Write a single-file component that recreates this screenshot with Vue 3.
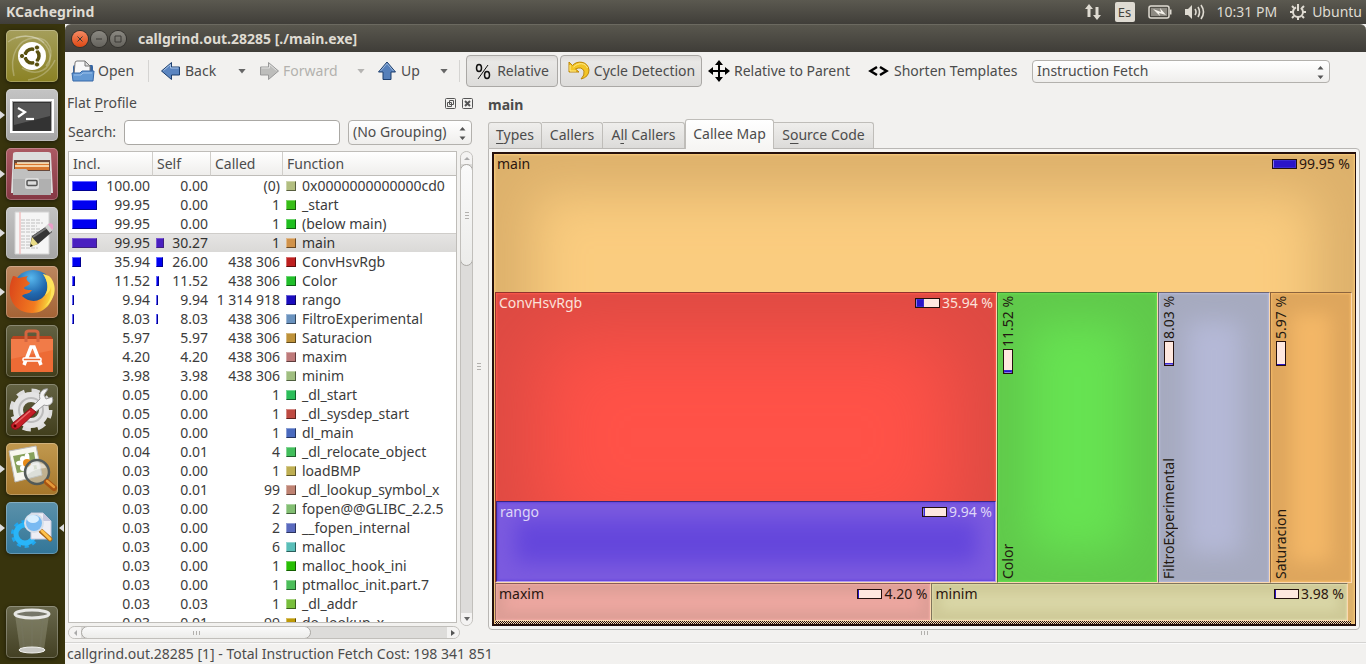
<script setup>
import { ref } from 'vue'

const search = ref('')
const grouping = ref('(No Grouping)')
const eventType = ref('Instruction Fetch')

const tabs = [
  { pre: '', key: 'T', post: 'ypes', active: false, cls: 'w-types' },
  { pre: 'Callers', key: '', post: '', active: false, cls: 'w-callers' },
  { pre: 'A', key: 'l', post: 'l Callers', active: false, cls: 'w-all' },
  { pre: 'Callee Map', key: '', post: '', active: true, cls: 'w-map' },
  { pre: 'S', key: 'o', post: 'urce Code', active: false, cls: 'w-source' }
]

const rows = [
  ['100.00', '0.00', '(0)', '#b2be80', '0x0000000000000cd0'],
  ['99.95', '0.00', '1', '#38be18', '_start'],
  ['99.95', '0.00', '1', '#20be20', '(below main)'],
  ['99.95', '30.27', '1', '#d0924a', 'main'],
  ['35.94', '26.00', '438 306', '#be2020', 'ConvHsvRgb'],
  ['11.52', '11.52', '438 306', '#20be2a', 'Color'],
  ['9.94', '9.94', '1 314 918', '#1a0cbe', 'rango'],
  ['8.03', '8.03', '438 306', '#6a92be', 'FiltroExperimental'],
  ['5.97', '5.97', '438 306', '#be923a', 'Saturacion'],
  ['4.20', '4.20', '438 306', '#be7a7a', 'maxim'],
  ['3.98', '3.98', '438 306', '#a0be80', 'minim'],
  ['0.05', '0.00', '1', '#2cbe5a', '_dl_start'],
  ['0.05', '0.00', '1', '#be4a42', '_dl_sysdep_start'],
  ['0.05', '0.00', '1', '#4a6abe', 'dl_main'],
  ['0.04', '0.01', '4', '#42be5c', '_dl_relocate_object'],
  ['0.03', '0.00', '1', '#beae52', 'loadBMP'],
  ['0.03', '0.01', '99', '#be8272', '_dl_lookup_symbol_x'],
  ['0.03', '0.00', '2', '#82be72', 'fopen@@GLIBC_2.2.5'],
  ['0.03', '0.00', '2', '#5a6abe', '__fopen_internal'],
  ['0.03', '0.00', '6', '#5abeb8', 'malloc'],
  ['0.03', '0.00', '1', '#28be04', 'malloc_hook_ini'],
  ['0.03', '0.00', '1', '#4cbe5a', 'ptmalloc_init.part.7'],
  ['0.03', '0.03', '1', '#78be3c', '_dl_addr'],
  ['0.03', '0.01', '99', '#be9a08', 'do_lookup_x']
].map(([incl, self, called, color, name]) => ({ incl, self, called, color, name }))

const bar = (value) => {
  const n = parseFloat(value)
  return n >= 7 ? Math.round(n / 4) + 'px' : '0px'
}
</script>

<template>
  <div class="desktop">
    <header class="panel">
      <span class="app-name">KCachegrind</span>
      <div class="indicators">
        <svg class="ind-net" width="18" height="18" viewBox="0 0 18 18"><path d="M5 1 1 6h2.500v8h3V6H9zM13 17l4-5h-2.500V4h-3v8H9z" fill="#dfdbd2" /></svg>
        <span class="lang">Es</span>
        <svg class="ind-bat" width="24" height="14" viewBox="0 0 24 14"><rect x="1" y="1" width="20" height="12" rx="2" fill="none" stroke="#dfdbd2" stroke-width="1.500" /><rect x="3" y="3" width="16" height="8" fill="#8d8a82" /><path d="M22 4.500h1.500v5H22z" fill="#dfdbd2" /><path d="m5 4 8 3-1-4 6 7-7-2 1 3z" fill="#f4f1ea" /></svg>
        <svg class="ind-vol" width="21" height="16" viewBox="0 0 21 16"><path d="M1 5h3l4-4v14l-4-4H1z" fill="#dfdbd2" /><path d="M11 5q2 3 0 6M14 3q3 5 0 10M17 1q5 7 0 14" fill="none" stroke="#dfdbd2" stroke-width="1.600" /></svg>
        <span class="clock">10:31 PM</span>
        <svg class="ind-gear" width="18" height="18" viewBox="0 0 18 18"><circle cx="9" cy="9" r="5" fill="none" stroke="#dfdbd2" stroke-width="2" stroke-dasharray="27 5" stroke-dashoffset="-26" /><path d="M9 1v7M3 3l2 2M15 3l-2 2M1 9h3M14 9h3M3 15l2-2M15 15l-2-2M9 14v3" stroke="#dfdbd2" stroke-width="2" /></svg>
        <span>Ubuntu</span>
      </div>
    </header>

    <div class="workspace">
      <nav class="launcher" aria-label="Launcher">
        <button class="tile t-dash" aria-label="Dash">
          <svg viewBox="0 0 52 52"><g fill="none" stroke="#fff" stroke-opacity=".25" stroke-width="1.500"><path d="M8 46C3 25 12 9 28 8s22 15 12 28" /><path d="M10 8c15-5 32 2 34 17s-13 22-28 13" /><path d="M2 12C12 4 30 4 38 13M22 50c12-2 22-9 27-20" /></g><circle cx="26" cy="26" r="14" fill="#fff" /><circle cx="26" cy="26" r="7" fill="none" stroke="#59510f" stroke-width="3.500" /><path d="M26 26h-9M26 26l5-9M26 26l5 9" stroke="#fff" stroke-width="2" /><circle cx="26" cy="26" r="4" fill="#fff" /><g fill="#59510f" stroke="#fff"><circle cx="16" cy="26" r="2.600" /><circle cx="31" cy="17.500" r="2.600" /><circle cx="31" cy="34.500" r="2.600" /></g></svg>
        </button>
        <button class="tile t-silver running" aria-label="Terminal">
          <svg viewBox="0 0 52 52"><path d="M4 10h44v37H4z" fill="#aaa" /><path d="M4 10h44v34H4z" fill="#fff" /><path d="M6 12h40v30H6z" fill="#a7a7a7" /><path d="M7 13h38v29H7z" fill="#333" /><path d="M8 14h36v13L8 36z" fill="#555" /><path d="m12 19 7 4-7 5" fill="none" stroke="#fff" stroke-width="2.200" /><path d="M20 30h8" stroke="#fff" stroke-width="2.200" /></svg>
        </button>
        <button class="tile t-wine running" aria-label="Files">
          <svg viewBox="0 0 52 52"><path d="M7 6q0-2 3-2h32q3 0 3 2l2 39H5z" fill="#ddd" /><path d="M8 12h36v12H8z" fill="#67483b" /><path d="M9 15h34v7H9z" fill="#d87830" /><path d="M11 15h32M9 18h34" stroke="#fff2cf" stroke-width="1.500" /><path d="M7 21h13l2 2h23v24H7z" fill="#b0b0b0" /><path d="M7 21h13l2 2h23v8H7z" fill="#c0c0c0" /><rect x="19" y="30" width="14" height="11" rx="2" fill="#ddd" /><rect x="21" y="32.500" width="10" height="5" rx="1" fill="#ddd" stroke="#555" stroke-width="1.500" /></svg>
        </button>
        <button class="tile t-silver running" aria-label="Text Editor">
          <svg viewBox="0 0 52 52"><path d="M9 5h34v42H9z" fill="#f5f5f5" stroke="#d2d2d2" /><path d="M14 5v42" stroke="#f1a8a8" /><path d="M15 13h20M15 16h22M15 19h16M15 22h20M15 25h21M15 29h17M15 32h16M15 35h18M15 38h14M15 41h17" stroke="#bfbfbf" stroke-dasharray="4 1" /><path d="m24 39 2-10 15-10 5 6-14 12z" fill="#353535" /><path d="m27 30 15-10" stroke="#777" stroke-width="2" /><path d="m24 40 2-10 6 7z" fill="#e9dc86" /><path d="m24 40 1-3 2 2z" fill="#111" /><path d="m39 20 3-3q4 0 5 5l-3 4z" fill="#d0d0d0" /><path d="M42 17q4-2 5 1t-1 5z" fill="#eb9fc9" /></svg>
        </button>
        <button class="tile t-fox running" aria-label="Firefox">
          <svg viewBox="0 0 52 52"><defs><radialGradient id="globe" cx=".45" cy=".2" r=".8"><stop offset="0" stop-color="#58b8ee" /><stop offset=".5" stop-color="#2168ae" /><stop offset="1" stop-color="#173a73" /></radialGradient><linearGradient id="fox" x1="0" y1="0" x2="1" y2=".2"><stop offset="0" stop-color="#d9431a" /><stop offset=".7" stop-color="#f27b20" /><stop offset="1" stop-color="#f7d13a" /></linearGradient></defs><circle cx="27" cy="24" r="20" fill="url(#globe)" /><path d="M7 10c3 0 4 2 6 2l9-2c-3 3-1 5 2 7-1 3-5 3-6 5 1 2 5 2 8 2-3 5-8 3-10 6 7 7 19 7 24-3 3-6 1-14-3-19 6 2 7 5 8 9 6 13-2 30-19 30C8 47-2 30 7 10z" fill="url(#fox)" /><path d="M37 8c5 7 6 15 2 21 4-2 6-6 6-9 1 8-1 17-8 22 12-7 15-20 8-30l-2-2z" fill="#ffe35c" /></svg>
        </button>
        <button class="tile t-olive" aria-label="Software Center">
          <svg viewBox="0 0 52 52"><path d="M5 14h42l-2-3H7z" fill="#b9441f" /><path d="M5 14h42v33H5z" fill="#ed6b35" /><path d="M5 14h42v11L5 34z" fill="#f17b48" /><path d="M20 17V8q0-2 3-2h6q3 0 3 2v9" fill="none" stroke="#d4653f" stroke-width="3" /><path d="m18 40 7-18h3l7 18" fill="none" stroke="#fff" stroke-width="3.500" /><rect x="17" y="33" width="18" height="3" rx="1" fill="#ed6b35" stroke="#fff" stroke-width="1.500" /></svg>
        </button>
        <button class="tile t-olive" aria-label="System Settings">
          <svg viewBox="0 0 52 52"><circle cx="25" cy="26" r="19" fill="none" stroke="#ddd" stroke-width="5" stroke-dasharray="8 6.920" /><circle cx="25" cy="26" r="13" fill="none" stroke="#e4e4e4" stroke-width="10" /><circle cx="25" cy="26" r="12" fill="none" stroke="#bcbcbc" stroke-width="2" /><path d="m23 26 11-11c-2-6 3-11 8-10l-4 6 2 4 6-2c3 6-3 10-8 8L27 30z" fill="#f3f3f3" stroke="#999" /><path d="m25 24 5 4-17 16q-4 3-7 0-2-3 1-5z" fill="#c71f28" stroke="#8c1018" /><path d="M24 27 9 40" stroke="#e86a6a" stroke-width="1.500" /><circle cx="9" cy="42" r="1.500" fill="#500" /></svg>
        </button>
        <button class="tile t-gold running" aria-label="Image Viewer">
          <svg viewBox="0 0 52 52"><path d="m3 8 27-5 6 29-27 7z" fill="#f7f7ef" stroke="#bbb" /><path d="m7 13 21-4 3 17-20 4z" fill="#87a15c" /><g fill="#fff"><ellipse cx="21" cy="15" rx="2.500" ry="5" /><ellipse cx="21" cy="26" rx="2.500" ry="5" /><ellipse cx="15" cy="20" rx="5" ry="2.500" /><ellipse cx="27" cy="20" rx="5" ry="2.500" /><circle cx="17" cy="16" r="3" /><circle cx="25" cy="25" r="3" /><circle cx="17" cy="25" r="3" /></g><circle cx="21" cy="20" r="4" fill="#e78a18" /><circle cx="31" cy="29" r="12" fill="#c9ceca" fill-opacity=".6" stroke="#535a58" stroke-width="2.500" /><path d="M21 28q2-8 10-8t9 5q-10 0-19 7z" fill="#fff" fill-opacity=".5" /><path d="m41 39 7 6" stroke="#a85412" stroke-width="6" stroke-linecap="round" /><path d="m41 38 7 6" stroke="#e69a39" stroke-width="2.500" stroke-linecap="round" /></svg>
        </button>
        <button class="tile t-blue running focused" aria-label="KCachegrind">
          <svg viewBox="0 0 52 52"><circle cx="19" cy="32" r="12" fill="none" stroke="#20a7ee" stroke-width="4" stroke-dasharray="4 3.540" /><circle cx="19" cy="32" r="9" fill="none" stroke="#29b5f8" stroke-width="5" /><path d="M25 11h12l8 8v18H25z" fill="#eeeef5" stroke="#c6c8db" /><path d="M37 11v8h8z" fill="#c5c8df" /><path d="m35 29 9 8" stroke="#a86415" stroke-width="5" stroke-linecap="round" /><path d="m36 29 8 8" stroke="#ffc24b" stroke-width="3" stroke-linecap="round" /><circle cx="28" cy="21" r="9" fill="#79baf2" stroke="#d7dfea" stroke-width="2" /><ellipse cx="27" cy="17" rx="6" ry="4" fill="#d9efff" /></svg>
        </button>
        <button class="tile t-trash" aria-label="Trash">
          <svg viewBox="0 0 52 52"><path d="m9 9 5 35q12 4 24 0l5-35z" fill="#a9a891" fill-opacity=".35" /><path d="m15 12 3 30M26 12v32M37 12l-3 30" stroke="#777662" stroke-opacity=".3" stroke-width="2" /><ellipse cx="26" cy="44" rx="13" ry="3" fill="#c9c9c4" stroke="#f3f3f0" /><ellipse cx="26" cy="8" rx="17" ry="4" fill="#77776a" stroke="#e7e7e4" stroke-width="3" /></svg>
        </button>
      </nav>

      <main class="window">
        <div class="titlebar">
          <button class="wm close" aria-label="Close"><svg viewBox="0 0 16 16"><path d="m5.500 5.500 5 5m0-5-5 5" /></svg></button>
          <button class="wm" aria-label="Minimize"><svg viewBox="0 0 16 16"><path d="M5 8h6" /></svg></button>
          <button class="wm" aria-label="Maximize"><svg viewBox="0 0 16 16"><path d="M5 5h6v6H5z" /></svg></button>
          <h1>callgrind.out.28285 [./main.exe]</h1>
        </div>

        <div class="toolbar">
          <button class="tool open">
            <svg width="24" height="24" viewBox="0 0 24 24"><path d="M2 8q0-2 2-2h17q1 0 1 2v8H2z" fill="#3465a4" /><path d="M4 4q0-2 2-2h8l5 5v9H3z" fill="#f8f8f8" stroke="#777" /><path d="M14 2v5h5z" fill="#ddd" stroke="#777" /><path d="M1 14h8l2-2h12l-1 10H2z" fill="#6499d3" stroke="#3668a8" /><path d="M3 16h7l2-2h9" fill="none" stroke="#9bc0ea" /></svg>
            <span>Open</span>
          </button>
          <i class="sep"></i>
          <button class="tool back">
            <svg width="22" height="22" viewBox="0 0 22 22"><path d="m1.500 11 10-8.500V7h8v8h-8v4.500z" fill="#5b85c0" stroke="#1d3f6e" stroke-linejoin="round" /><path d="m3.500 10.500 7-6V8h8" fill="none" stroke="#a9c4e6" /></svg>
            <span>Back</span>
          </button>
          <button class="drop" aria-label="Back history"></button>
          <button class="tool forward" disabled>
            <svg width="22" height="22" viewBox="0 0 22 22"><path d="m20.500 11-10-8.500V7h-8v8h8v4.500z" fill="#bdbdbb" stroke="#999" stroke-linejoin="round" /><path d="M3.500 8h8V4.500l7 6" fill="none" stroke="#e0e0df" /></svg>
            <span>Forward</span>
          </button>
          <button class="drop off" aria-label="Forward history" disabled></button>
          <button class="tool up">
            <svg width="20" height="22" viewBox="0 0 20 22"><path d="m10 2 8.500 10H14v7.500H6V12H1.500z" fill="#5680ba" stroke="#1d3f6e" stroke-linejoin="round" /><path d="m3.500 11 6.500-7.500 6.500 7.500" fill="none" stroke="#9db9dd" /></svg>
            <span>Up</span>
          </button>
          <button class="drop" aria-label="Up history"></button>
          <i class="sep"></i>
          <button class="tool pressed relative" aria-pressed="true">
            <svg width="16" height="18" viewBox="0 0 16 18"><g fill="none" stroke="#111" stroke-width="1.500"><ellipse cx="4" cy="6" rx="2.500" ry="3.500" /><ellipse cx="12" cy="13" rx="2.500" ry="3.500" /><path d="M13 3 3 17" stroke-width="1" /></g></svg>
            <span>Relative</span>
          </button>
          <button class="tool pressed cycle" aria-pressed="true">
            <svg width="24" height="22" viewBox="0 0 24 22"><path d="M2 2v10h10L8.500 9q6-3 8.500 2 1 4-3 8 8-2 8-9C21 1 10 0 5.500 5.500z" fill="#f3c526" stroke="#bd8608" stroke-linejoin="round" /><path d="M3 5v6h6M6.500 7c5-5 12-4 14 1" fill="none" stroke="#ffec91" /></svg>
            <span>Cycle Detection</span>
          </button>
          <button class="tool parent">
            <svg width="22" height="24" viewBox="0 0 22 24"><path d="M3 12h16M11 4v16" stroke="#000" stroke-width="2" /><path d="m0 12 5-4v8zM22 12l-5-4v8zM11 1l4 5H7zM11 23l4-5H7z" /></svg>
            <span>Relative to Parent</span>
          </button>
          <button class="tool shorten">
            <svg width="21" height="12" viewBox="0 0 21 12"><path d="M9 2 2.500 6 9 10M12 2l6.500 4L12 10" fill="none" stroke="#000" stroke-width="2.500" /></svg>
            <span>Shorten Templates</span>
          </button>
          <span class="combo event">
            <select v-model="eventType" aria-label="Event type"><option>Instruction Fetch</option></select>
            <svg width="7" height="15" viewBox="0 0 7 15"><path d="M3.500 1 6.500 4.500h-6zM3.500 14l3-3.500h-6z" fill="#555" /></svg>
          </span>
        </div>

        <div class="content">
          <section class="dock">
            <div class="dock-title">
              <h2>Flat <u>P</u>rofile</h2>
              <button aria-label="Float"><svg width="11" height="11" viewBox="0 0 11 11"><rect x=".5" y=".5" width="10" height="10" rx="1" /><path d="M4.500 2.500h4v4h-4zM2.500 4.500h4v4h-4z" /></svg></button>
              <button aria-label="Close dock"><svg width="11" height="11" viewBox="0 0 11 11"><rect x=".5" y=".5" width="10" height="10" rx="1" /><path d="m3 3 5 5m0-5L3 8" stroke-width="2" /></svg></button>
            </div>
            <div class="search-row">
              <label for="search">S<u>e</u>arch:</label>
              <input id="search" v-model="search" type="text" />
              <span class="combo group">
                <select v-model="grouping" aria-label="Grouping"><option>(No Grouping)</option></select>
                <svg width="7" height="15" viewBox="0 0 7 15"><path d="M3.500 1 6.500 4.500h-6zM3.500 14l3-3.500h-6z" fill="#555" /></svg>
              </span>
            </div>
            <div class="list-area">
              <div class="list">
                <table>
                  <colgroup><col class="c-incl" /><col class="c-self" /><col class="c-called" /><col /></colgroup>
                  <thead><tr><th>Incl.</th><th>Self</th><th>Called</th><th>Function</th></tr></thead>
                  <tbody>
                    <tr v-for="r in rows" :key="r.name" :class="{ selected: r.name === 'main' }">
                      <td><div class="cost"><i v-if="bar(r.incl) !== '0px'" :style="{ width: bar(r.incl) }"></i><span>{{ r.incl }}</span></div></td>
                      <td><div class="cost"><i v-if="bar(r.self) !== '0px'" :style="{ width: bar(r.self) }"></i><span>{{ r.self }}</span></div></td>
                      <td class="called">{{ r.called }}</td>
                      <td><div class="fn"><i :style="{ backgroundColor: r.color }"></i><span>{{ r.name }}</span></div></td>
                    </tr>
                  </tbody>
                </table>
              </div>
              <div class="vscroll"><span class="arrow a-up"></span><div class="thumb"><i class="grip-h"></i></div><span class="arrow a-down"></span></div>
              <div class="hscroll"><span class="arrow a-left"></span><div class="thumb"><i class="grip-v"></i></div><span class="arrow a-right"></span></div>
            </div>
          </section>

          <div class="splitter"><i class="grip-h"></i></div>

          <section class="detail">
            <h2>main</h2>
            <div class="tabs" role="tablist">
              <button v-for="t in tabs" :key="t.pre + t.post" role="tab" :aria-selected="t.active" :class="[t.cls, { active: t.active }]"><span>{{ t.pre }}<u v-if="t.key">{{ t.key }}</u>{{ t.post }}</span></button>
            </div>
            <div class="tab-page">
              <div class="treemap">
                <div class="cell root">
                  <div class="caption"><span>main</span><b class="meter"><i class="m100"></i></b><span>99.95 %</span></div>
                </div>
                <div class="band middle">
                  <div class="cell conv">
                    <div class="caption"><span>ConvHsvRgb</span><b class="meter"><i class="m36"></i></b><span>35.94 %</span></div>
                    <div class="cell rango">
                      <div class="caption"><span>rango</span><b class="meter"><i class="m8"></i></b><span>9.94 %</span></div>
                    </div>
                  </div>
                  <div class="cell color"><div class="caption upright"><span>Color</span><b class="meter"><i class="m10"></i></b><span>11.52 %</span></div></div>
                  <div class="cell filtro"><div class="caption upright"><span>FiltroExperimental</span><b class="meter"><i class="m8"></i></b><span>8.03 %</span></div></div>
                  <div class="cell satur"><div class="caption upright"><span>Saturacion</span><b class="meter"><i class="m4"></i></b><span>5.97 %</span></div></div>
                </div>
                <div class="band bottom">
                  <div class="cell maxim"><div class="caption"><span>maxim</span><b class="meter"><i class="m4"></i></b><span>4.20 %</span></div></div>
                  <div class="cell minim"><div class="caption"><span>minim</span><b class="meter"><i class="m4"></i></b><span>3.98 %</span></div></div>
                </div>
                <div class="hatch"></div>
              </div>
            </div>
            <div class="bottom-grip"><i class="grip-v"></i></div>
          </section>
        </div>

        <footer class="status">callgrind.out.28285 [1] - Total Instruction Fetch Cost: 198 341 851</footer>
      </main>
    </div>
  </div>
</template>

<style>
body { margin: 0; overflow: hidden; }
</style>

<style scoped>
* { box-sizing: border-box; }
.desktop { height: 100vh; display: flex; flex-direction: column; font: 14px/18px "Noto Sans", "Open Sans", sans-serif; color: #4c4c4c; background: #38340d; }
button, input, select { font: inherit; color: inherit; }
button { border: 0; padding: 0; background: none; white-space: nowrap; }
h1, h2 { margin: 0; font-size: 14px; line-height: 18px; }
u { text-underline-offset: 3px; }
svg { display: block; flex: none; }

.panel { height: 24px; flex: none; display: flex; align-items: center; justify-content: space-between; padding: 0 4px 0 6px; background: linear-gradient(#5b5950, #403e39); color: #dfdbd2; }
.app-name { font-weight: bold; }
.indicators { display: flex; align-items: center; }
.ind-net { margin-right: 13px; }
.lang { width: 20px; height: 20px; border-radius: 2px; background: #dfdbd2; color: #45433c; font-size: 13px; line-height: 20px; text-align: center; margin-right: 13px; }
.ind-bat { margin-right: 12px; }
.ind-vol { margin-right: 12px; }
.clock { margin-right: 12px; }
.ind-gear { margin-right: 5px; }

.workspace { flex: 1; min-height: 0; display: flex; }
.launcher { width: 65px; flex: none; padding: 6px 0 6px 6px; display: flex; flex-direction: column; gap: 7px; background: #38340d; }
.tile { position: relative; width: 52px; height: 52px; border-radius: 5px; box-shadow: inset 0 0 0 1px rgba(255, 255, 255, .25), 0 1px 4px rgba(0, 0, 0, .5); }
.tile svg { width: 52px; height: 52px; }
.t-dash { background: linear-gradient(#a59e5b, #8b8224); }
.t-silver { background: linear-gradient(#c4c4c4, #a5a5a5); }
.t-wine { background: linear-gradient(#ac5a63, #843743); }
.t-fox { background: linear-gradient(#bd875f, #a46335); }
.t-olive { background: linear-gradient(#636243, #413e1c); }
.t-gold { background: linear-gradient(#c1994f, #a5762a); }
.t-blue { background: linear-gradient(#5b91aa, #327698); }
.t-trash { margin-top: auto; background: linear-gradient(#69684d, #434023); }
.running::before, .focused::after { content: ""; position: absolute; top: 22px; border: 4px solid transparent; }
.running::before { left: -6px; border-left: 5px solid #ddd; border-right: 0; }
.focused::after { right: -6px; border-right: 5px solid #ddd; border-left: 0; }

.window { flex: 1; min-width: 0; display: flex; flex-direction: column; background: #f2f1ef; }
.titlebar { height: 28px; flex: none; display: flex; align-items: center; gap: 3px; padding-left: 7px; border-radius: 6px 6px 0 0; background: linear-gradient(#59574e, #3f3d38); border-top: 1px solid #6b6960; color: #dfdbd2; }
.titlebar h1 { margin-left: 9px; white-space: nowrap; }
.wm { width: 16px; height: 16px; border-radius: 50%; background: linear-gradient(#8b8982, #65635d); box-shadow: 0 0 0 1px #33312d; }
.wm svg { fill: none; stroke: #3c3b37; stroke-width: 1; }
.close { background: linear-gradient(#f68a63, #dd4814); }

.toolbar { height: 38px; flex: none; display: flex; align-items: center; padding-left: 6px; }
.tool { height: 32px; flex: none; display: flex; align-items: center; gap: 4px; }
.open { width: 77px; gap: 3px; }
.sep { width: 1px; height: 22px; flex: none; background: #d5d4d2; }
.back { width: 78px; margin-left: 11px; gap: 3px; }
.drop { width: 8px; height: 5px; flex: none; background: #666; clip-path: polygon(0 0, 100% 0, 50% 100%); }
.drop.off { background: #b5b4b2; }
.forward { width: 99px; margin-left: 12px; gap: 3px; color: #b3b1ae; }
.up { width: 63px; margin-left: 12px; }
.drop + .sep { margin-left: 11px; }
.pressed { justify-content: center; border: 1px solid #aaa8a5; border-radius: 4px; background: linear-gradient(#dddbd9, #e9e8e6 20%, #dddcda); }
.relative { width: 92px; margin-left: 6px; gap: 6px; }
.cycle { width: 142px; margin-left: 2px; gap: 3px; }
.parent { width: 152px; margin-left: 6px; }
.shorten { width: 160px; margin-left: 8px; margin-right: 4px; gap: 5px; }
.combo { position: relative; display: block; }
.combo select { width: 100%; height: 100%; appearance: none; border: 1px solid #b3b1ad; border-radius: 4px; background: linear-gradient(#fff, #efeeec); padding: 0 16px 0 4px; }
.combo svg { position: absolute; right: 6px; top: 50%; margin-top: -6px; pointer-events: none; }
.event { height: 23px; flex: 1; max-width: 298px; margin-right: 36px; }

.content { flex: 1; min-height: 0; display: flex; }
.dock { width: 408px; flex: none; display: flex; flex-direction: column; padding-left: 3px; }
.dock-title { height: 28px; flex: none; display: flex; align-items: center; gap: 6px; padding: 0 0 2px; }
.dock-title h2 { flex: 1; font-weight: normal; margin-left: -1px; }
.dock-title svg { fill: none; stroke: #555; }
.search-row { height: 26px; flex: none; display: flex; align-items: center; margin: 1px 1px 6px 0; }
.search-row label { width: 56px; }
.search-row input { flex: 1; min-width: 0; height: 25px; border: 1px solid #aaa8a4; border-radius: 4px; background: #fff; padding: 0 4px; }
.group { width: 124px; height: 25px; margin-left: 8px; }
.list-area { flex: 1; min-height: 0; display: grid; grid-template-columns: 1fr 13px; grid-template-rows: 1fr 13px; column-gap: 3px; row-gap: 3px; padding-bottom: 3px; }
.list { overflow: hidden; min-height: 0; border: 1px solid #bfbdb9; background: #fff; color: #3c3c3c; }
table { width: 100%; border-collapse: separate; border-spacing: 0; table-layout: fixed; }
.c-incl { width: 84px; }
.c-self { width: 58px; }
.c-called { width: 72px; }
th { height: 24px; padding: 0 0 0 4px; font-weight: normal; text-align: left; color: #4c4c4c; border-right: 1px solid #d0ceca; border-bottom: 1px solid #bfbdb9; background: linear-gradient(#fff, #efeeec); }
th:last-child { border-right: 0; }
td { height: 19px; padding: 0 3px; white-space: nowrap; line-height: 19px; }
.selected td { background: linear-gradient(#e6e5e4, #dad9d7); box-shadow: inset 0 1px #cfcdca; color: #333; }
.cost { display: flex; align-items: center; height: 19px; }
.cost span { margin-left: auto; }
.cost i, .fn i { height: 10px; border: 1px solid; }
.cost i { background: #0000f0; border-color: #6666ff #000090 #000090 #6666ff; }
.selected .cost i { background: #4a20c0; border-color: #7a56d0 #402080 #402080 #7a56d0; }
.called { text-align: right; }
.fn { display: flex; align-items: center; gap: 6px; height: 19px; }
.fn i { width: 10px; border-color: rgba(255, 255, 255, .35) rgba(0, 0, 0, .5) rgba(0, 0, 0, .5) rgba(255, 255, 255, .35); }

.vscroll, .hscroll { display: flex; border: 1px solid #c1bfbb; border-radius: 7px; background: #dddcda; overflow: hidden; }
.vscroll { flex-direction: column; justify-content: space-between; margin-bottom: -3px; }
.hscroll { margin-right: -3px; }
.arrow { flex: 0 0 12px; display: flex; align-items: center; justify-content: center; background: #f4f3f2; }
.arrow::before { content: ""; border: 3px solid transparent; }
.a-up::before { border-bottom: 3px solid #aaa; border-top: 0; }
.a-down::before { border-top: 4px solid #666; border-bottom: 0; }
.a-left::before { border-right: 3px solid #aaa; border-left: 0; }
.a-right::before { border-left: 4px solid #555; border-right: 0; }
.thumb { display: flex; align-items: center; justify-content: center; border: 1px solid #aaa8a4; border-radius: 7px; background: linear-gradient(#fafafa, #ececea); }
.vscroll .thumb { height: 102px; margin: 0 -1px auto; }
.hscroll .thumb { width: 59%; margin: -1px auto -1px 0; }
.grip-h { width: 4px; height: 7px; background: repeating-linear-gradient(#b2b0ad 0 1px, transparent 1px 3px); }
.grip-v { width: 7px; height: 4px; background: repeating-linear-gradient(90deg, #b2b0ad 0 1px, transparent 1px 3px); }
.splitter { width: 15px; flex: none; display: flex; align-items: center; justify-content: center; padding-right: 4px; }

.detail { flex: 1; min-width: 0; display: flex; flex-direction: column; padding-right: 6px; }
.detail h2 { height: 31px; flex: none; padding-top: 6px; }
.tabs { height: 27px; flex: none; display: flex; align-items: flex-end; }
.tabs button { height: 26px; padding-bottom: 2px; border: 1px solid #bfbdb9; border-left-width: 0; border-bottom: 0; border-radius: 0 3px 0 0; background: linear-gradient(#efeeec, #dcdbd9); }
.tabs button:first-child { border-left-width: 1px; border-top-left-radius: 3px; }
.tabs .active { position: relative; height: 30px; margin-bottom: -1px; padding-bottom: 2px; border-left-width: 1px; border-radius: 3px 3px 0 0; background: linear-gradient(#fff, #f6f5f3); }
.w-types { width: 54px; }
.w-callers { width: 61px; }
.w-all { width: 82px; }
.w-map { width: 89px; }
.w-source { width: 100px; }
.tab-page { flex: 1; min-height: 0; border: 1px solid #b9b7b4; border-radius: 0 4px 4px 4px; padding: 3px; background: #f6f5f3; display: flex; }
.treemap { flex: 1; min-width: 0; display: flex; flex-direction: column; border: 2px solid #25100c; border-right-width: 1px; padding: 0 3px 0 1px; background: #facc7f; box-shadow: inset 0 0 2px 1px #facc7f, inset 0 0 50px 40px #ddb16c; }
.cell { position: relative; min-width: 0; min-height: 0; }
.root { flex: 138; color: #2b1610; }
.band { display: flex; min-height: 0; }
.middle { flex: 291; }
.bottom { flex: 38; padding-right: 4px; }
.band .cell { border: 1px solid rgba(40, 20, 20, .5); border-right-color: #fbd8b0; border-bottom-color: #fbd8b0; }
.conv { flex: 500; display: flex; flex-direction: column; background: #ff5248; box-shadow: inset 0 0 2px 1px #ff5a4c, inset 0 0 80px 40px #dc4a43; color: #fbe2da; }
.conv > .caption { flex: 207; }
.band .rango { flex: 80; background: #6547dc; box-shadow: inset 0 0 2px 1px #6245dc, inset 0 0 20px 18px #7c5bdf; border-color: #3a2580 #b29bef #b29bef #3a2580; color: #ded5f8; }
.color { flex: 159; background: #67e352; box-shadow: inset 0 0 2px 1px #66e050, inset 0 0 45px 30px #60c84b; color: #221810; }
.filtro { flex: 110; background: #b5b9d7; box-shadow: inset 0 0 2px 1px #b5b9d9, inset 0 0 24px 28px #a6aabf; color: #221810; }
.satur { flex: 80; background: #f3b767; box-shadow: inset 0 0 2px 1px #f6ba68, inset 0 0 18px 20px #dea65d; color: #221810; }
.maxim { flex: 435; background: #eda7a0; box-shadow: inset 0 0 2px 1px #f0aaa3, inset 0 0 12px 9px #dd9e96; color: #2b1610; }
.minim { flex: 415; background: #dad7a7; box-shadow: inset 0 0 2px 1px #dedaa8, inset 0 0 12px 9px #cec997; color: #2b1610; }
.caption { display: flex; align-items: flex-start; gap: 2px; padding: 1px 3px; line-height: 18px; white-space: nowrap; }
.root .caption { padding: 1px 2px 0; }
.caption span:first-child { margin-inline-end: auto; }
.meter { inline-size: 25px; block-size: 10px; margin-block-start: 4px; border: 1px solid #25100c; background: #ffe8df; display: flex; }
.meter i { block-size: 100%; background: #2a14c8; border: 1px solid #3c2cd0; border-inline-start-color: #8a7be8; }
.m100 { inline-size: 100%; }
.m36 { inline-size: 8px; }
.m10 { inline-size: 3px; }
.m8 { inline-size: 2px; }
.m4 { inline-size: 1px; }
.meter .m4 { border-width: 0; }
.upright { height: 100%; writing-mode: vertical-rl; transform: rotate(180deg); position: absolute; left: 0; top: 0; padding: 3px 1px; }
.hatch { height: 3px; flex: none; margin-right: 1px; background: repeating-conic-gradient(#25100c 0 25%, #fbdcb4 0 50%) 0 0 / 2px 2px; }
.bottom-grip { height: 12px; flex: none; display: flex; justify-content: center; padding-top: 1px; }
.status { height: 22px; flex: none; border-top: 1px solid #d5d4d2; box-shadow: inset 0 1px #fafafa; padding: 2px 2px; white-space: nowrap; }
</style>
